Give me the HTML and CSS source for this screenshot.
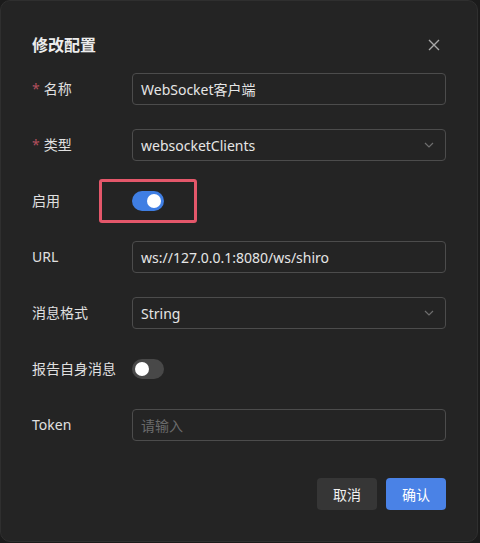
FILE: index.html
```html
<!DOCTYPE html>
<html lang="zh-CN">
<head>
<meta charset="utf-8">
<title>修改配置</title>
<link rel="stylesheet" href="styles.css">
</head>
<body>
<div class="dialog">
  <div class="header">
    <span class="title">修改配置</span>
    <span class="close">
      <svg width="12" height="12" viewBox="0 0 12 12"><path d="M1 1L11 11M11 1L1 11" stroke="#a8a8a8" stroke-width="1.4" fill="none"/></svg>
    </span>
  </div>
  <div class="form">
    <div class="row">
      <label class="label"><span class="req">*</span>名称</label>
      <div class="input"><span class="val">WebSocket客户端</span></div>
    </div>
    <div class="row">
      <label class="label"><span class="req">*</span>类型</label>
      <div class="input select"><span class="val">websocketClients</span>
        <svg class="chev" width="10" height="6" viewBox="0 0 10 6"><path d="M1 1L5 5L9 1" stroke="#6e6e6e" stroke-width="1.2" fill="none"/></svg>
      </div>
    </div>
    <div class="row">
      <label class="label">启用</label>
      <div class="switch on"><span class="knob"></span></div>
    </div>
    <div class="row">
      <label class="label">URL</label>
      <div class="input"><span class="val">ws://127.0.0.1:8080/ws/shiro</span></div>
    </div>
    <div class="row">
      <label class="label">消息格式</label>
      <div class="input select"><span class="val">String</span>
        <svg class="chev" width="10" height="6" viewBox="0 0 10 6"><path d="M1 1L5 5L9 1" stroke="#6e6e6e" stroke-width="1.2" fill="none"/></svg>
      </div>
    </div>
    <div class="row">
      <label class="label">报告自身消息</label>
      <div class="switch off"><span class="knob"></span></div>
    </div>
    <div class="row">
      <label class="label">Token</label>
      <div class="input"><span class="ph">请输入</span></div>
    </div>
  </div>
  <div class="footer">
    <button class="btn cancel">取消</button>
    <button class="btn ok">确认</button>
  </div>
  <div class="highlight"></div>
</div>
</body>
</html>
```

FILE: styles.css
```css
html, body {
  margin: 0;
  padding: 0;
  background: #1b1b1b;
}
body {
  width: 480px;
  height: 543px;
  font-family: "Noto Sans", "Noto Sans CJK SC", sans-serif;
  color: #e3e3e3;
}
.dialog {
  position: relative;
  box-sizing: border-box;
  width: 478px;
  height: 542px;
  background: #242424;
  border: 1px solid #2f2f2f;
  border-radius: 10px;
  padding: 32px 31px 31px 31px;
  display: flex;
  flex-direction: column;
}
.header {
  display: flex;
  justify-content: space-between;
  align-items: center;
  height: 24px;
}
.title {
  font-size: 16px;
  font-weight: 700;
  color: #ececec;
  line-height: 24px;
}
.close {
  display: flex;
  width: 12px;
  height: 12px;
  margin-right: 6px;
}
.form {
  margin-top: 16px;
  display: flex;
  flex-direction: column;
  gap: 24px;
}
.row {
  display: flex;
  align-items: center;
  height: 32px;
}
.label {
  width: 100px;
  font-size: 14px;
  color: #e0e0e0;
  line-height: 32px;
  white-space: nowrap;
}
.req {
  color: #b24f5d;
  margin-right: 4px;
}
.input {
  box-sizing: border-box;
  flex: 1;
  height: 32px;
  border: 1px solid #4c4c4c;
  border-radius: 4px;
  padding: 0 8px;
  display: flex;
  align-items: center;
  font-size: 14px;
}
.val {
  color: #e6e6e6;
}
.ph {
  color: #6b6b6b;
}
.select {
  justify-content: space-between;
}
.chev {
  margin-right: 3px;
}
.switch {
  width: 32px;
  height: 20px;
  border-radius: 10px;
  display: flex;
  align-items: center;
  padding: 0 3px;
  box-sizing: border-box;
}
.switch.on {
  background: #3f7ee3;
  justify-content: flex-end;
}
.switch.off {
  background: #484848;
  justify-content: flex-start;
}
.knob {
  width: 14px;
  height: 14px;
  border-radius: 50%;
  background: #ffffff;
}
.footer {
  margin-top: auto;
  display: flex;
  justify-content: flex-end;
  gap: 9px;
}
.btn {
  width: 60px;
  height: 32px;
  border: none;
  border-radius: 4px;
  font-family: "Noto Sans CJK SC", sans-serif;
  font-size: 14px;
  color: #f0f0f0;
}
.cancel {
  background: #363636;
}
.ok {
  background: #4a82e6;
  color: #ffffff;
}
.highlight {
  position: absolute;
  left: 98px;
  top: 178px;
  width: 92px;
  height: 38px;
  border: 3px solid #e4576a;
  border-radius: 3px;
}
```
